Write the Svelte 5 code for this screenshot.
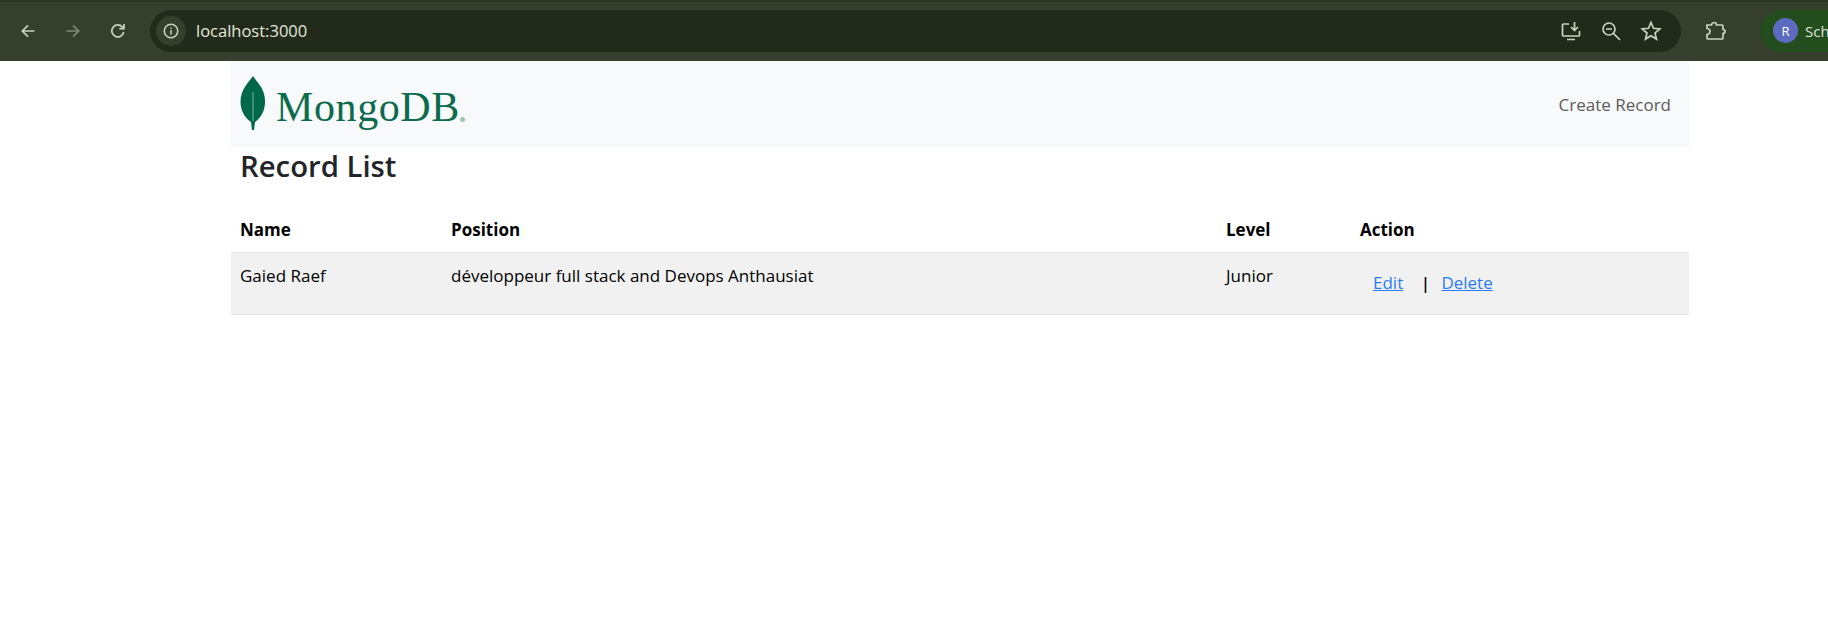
<script>
	let records = [
		{ name: 'Gaied Raef', position: 'développeur full stack and Devops Anthausiat', level: 'Junior' }
	];
</script>

<header class="chrome">
	<div class="strip"></div>
	<div class="toolbar">
		<button class="nav-btn" aria-label="Back">
			<svg viewBox="0 0 20 20" width="20" height="20"><path d="M16.5 10H4.5M10 4.3 4.3 10l5.700 5.700" /></svg>
		</button>
		<button class="nav-btn dim" aria-label="Forward">
			<svg viewBox="0 0 20 20" width="20" height="20"><path d="M3.500 10h12M10 4.300l5.700 5.700-5.700 5.700" /></svg>
		</button>
		<button class="nav-btn reload" aria-label="Reload">
			<svg viewBox="0 0 20 20" width="20" height="20"><path d="M15.700 11a6 6 0 1 1-1.500-5.200L16 7.600M16 3v4.600h-4.600" /></svg>
		</button>
		<div class="omnibox">
			<span class="site-info">
				<svg viewBox="0 0 20 20" width="18" height="18"><circle cx="10" cy="10" r="7.500" /><path d="M10 9v5M10 6v1.500" /></svg>
			</span>
			<span class="url">localhost:3000</span>
			<span class="omni-icons">
				<svg viewBox="0 0 22 22" width="22" height="22"><path d="M9 4H3.500a1 1 0 0 0-1 1v10a1 1 0 0 0 1 1h15a1 1 0 0 0 1-1v-4M7 19.500h8M14.500 2v8M11 7l3.500 3.500L18 7" /></svg>
				<svg viewBox="0 0 22 22" width="22" height="22"><circle cx="9" cy="9" r="6" /><path d="M6 9h6M13.500 13.500 20 20" /></svg>
				<svg viewBox="0 0 22 22" width="22" height="22"><path d="m11 2.500 2.500 5.800 6.300.6-4.800 4.100 1.500 6.100-5.500-3.300-5.500 3.300 1.500-6.100-4.800-4.100 6.300-.6z" /></svg>
			</span>
		</div>
		<span class="ext">
			<svg viewBox="0 0 22 22" width="22" height="22"><path d="M3 5h4.500a2.500 2.500 0 0 1 5 0H18a1 1 0 0 1 1 1v3.500a2 2 0 0 1 0 4V18a1 1 0 0 1-1 1H4a1 1 0 0 1-1-1v-3.500a3 3 0 0 0 0-6z" /></svg>
		</span>
		<span class="divider"></span>
		<span class="profile"><span class="avatar">R</span><span class="profile-name">Sch</span></span>
	</div>
</header>

<main class="page">
	<nav class="navbar">
		<a class="brand" href="/">
			<svg class="leaf" viewBox="0 0 26 54" width="26" height="54">
				<path d="M13 0C9 6 .5 13 .5 26c0 10 6 17 10.500 20l1 8h2l1-8c4.500-3 10-10 10-20C25.500 13 17 6 13 0z" />
				<path class="vein" d="M13 16v29" />
			</svg>
			<span class="wordmark">MongoDB</span><span class="reg"></span>
		</a>
		<a class="create" href="/create">Create Record</a>
	</nav>

	<h3>Record List</h3>

	<table>
		<thead>
			<tr>
				<th class="c-name">Name</th>
				<th class="c-position">Position</th>
				<th class="c-level">Level</th>
				<th>Action</th>
			</tr>
		</thead>
		<tbody>
			{#each records as record}
				<tr>
					<td>{record.name}</td>
					<td>{record.position}</td>
					<td>{record.level}</td>
					<td class="actions">
						<a href="/edit">Edit</a>
						<span class="sep">|</span>
						<a href="/delete">Delete</a>
					</td>
				</tr>
			{/each}
		</tbody>
	</table>
</main>

<style>
	:global(body) {
		background: #fff;
		font-family: "Open Sans", "Noto Sans", sans-serif;
		overflow: hidden;
	}

	.chrome {
		height: 61px;
		background: #363f2e;
		display: flex;
		flex-direction: column;
	}

	.strip {
		height: 2px;
		background: #2c3525;
	}

	.toolbar {
		height: 59px;
		display: flex;
		align-items: center;
		padding: 0 0 2px 18px;
		box-sizing: border-box;
		white-space: nowrap;
		overflow: hidden;
	}

	svg path,
	svg circle {
		fill: none;
		stroke: #c9d1bf;
		stroke-width: 1.7;
	}

	.nav-btn {
		width: 20px;
		height: 20px;
		margin-right: 25px;
		padding: 0;
		border: 0;
		background: none;
	}

	.nav-btn.dim {
		opacity: 0.5;
	}

	.nav-btn.reload {
		margin-right: 17px;
	}

	.omnibox {
		flex: none;
		width: 1531px;
		height: 42px;
		margin-left: 5px;
		border-radius: 21px;
		background: #222b1b;
		display: flex;
		align-items: center;
		padding: 0 19px 0 6px;
		box-sizing: border-box;
	}

	.site-info {
		width: 30px;
		height: 30px;
		border-radius: 50%;
		background: #363f2e;
		display: flex;
		align-items: center;
		justify-content: center;
	}

	.url {
		margin-left: 10px;
		font-size: 16.500px;
		color: #e3e8dc;
	}

	.omni-icons {
		margin-left: auto;
		display: flex;
		gap: 18px;
	}

	.ext {
		margin-left: 23px;
		display: flex;
	}

	.divider {
		width: 2px;
		height: 20px;
		margin-left: 20px;
		background: #4f5946;
	}

	.profile {
		flex: none;
		width: 120px;
		height: 42px;
		margin-left: 14px;
		border-radius: 21px 0 0 21px;
		background: #234d1c;
		display: flex;
		align-items: center;
		padding-left: 13px;
		box-sizing: border-box;
	}

	.avatar {
		width: 25px;
		height: 25px;
		border-radius: 50%;
		background: #5c6bc0;
		color: #fff;
		font-size: 13px;
		display: flex;
		align-items: center;
		justify-content: center;
	}

	.profile-name {
		margin-left: 7px;
		font-size: 15px;
		color: #dfe5d8;
	}

	.page {
		width: 1458px;
		margin-left: 231px;
	}

	.navbar {
		height: 86px;
		background: #f8f9fa;
		display: flex;
		align-items: center;
		justify-content: space-between;
		padding: 0 18px 0 9px;
	}

	.brand {
		display: flex;
		align-items: flex-start;
		text-decoration: none;
		height: 54px;
		margin-bottom: 2px;
	}

	.leaf path {
		fill: #00684a;
		stroke: none;
	}

	.leaf .vein {
		fill: none;
		stroke: #7fb3a0;
		stroke-width: 1;
	}

	.wordmark {
		margin: 4px 0 0 10px;
		font-family: "Liberation Serif", serif;
		font-size: 42px;
		letter-spacing: 0.6px;
		line-height: 54px;
		color: #0d6b4d;
	}

	.reg {
		width: 5px;
		height: 5px;
		margin: 41px 0 0 0;
		border-radius: 50%;
		background: #9cc5b5;
	}

	.create {
		color: #5c5c5c;
		font-size: 17px;
		text-decoration: none;
	}

	h3 {
		margin: 0;
		padding: 0 0 0 9px;
		height: 51px;
		box-sizing: border-box;
		font-size: 29.300px;
		font-weight: 600;
		line-height: 38px;
		color: #212529;
	}

	table {
		width: 100%;
		table-layout: fixed;
		border-collapse: collapse;
		font-size: 17px;
		color: #000;
	}

	th {
		height: 54px;
		padding: 9px 9px 0;
		text-align: left;
		font-weight: 700;
		border-bottom: 1px solid #dee2e6;
		box-sizing: border-box;
	}

	.c-name {
		width: 211px;
	}

	.c-position {
		width: 775px;
	}

	.c-level {
		width: 134px;
	}

	td {
		height: 62px;
		padding: 11px 9px 8px;
		vertical-align: top;
		background: #f1f1f1;
		border-bottom: 1px solid #dee2e6;
		box-sizing: border-box;
		line-height: 24px;
	}

	.actions {
		padding-top: 18px;
		padding-left: 22px;
	}

	.actions a {
		color: #2a7bf6;
		text-decoration: underline;
	}

	.sep {
		margin: 0 7px 0 13px;
		font-weight: 600;
	}
</style>
